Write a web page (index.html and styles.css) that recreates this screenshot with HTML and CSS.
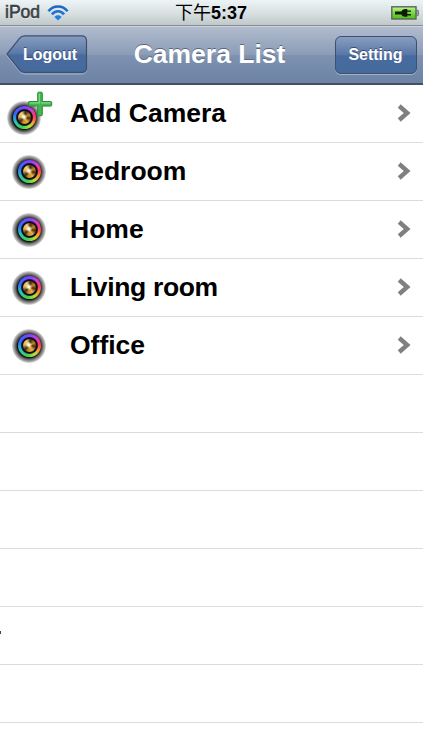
FILE: index.html
```html
<!DOCTYPE html>
<html lang="zh-CN">

<head>
    <meta charset="UTF-8">
    <title>Camera List</title>
    <link rel="stylesheet" href="styles.css">
</head>

<body>
    <div class="status-bar">
        <div class="carrier">
            <span>iPod</span>
            <svg class="wifi" width="22" height="16" viewBox="0 0 22 16">
                <defs>
                    <linearGradient id="wifiFill" gradientUnits="userSpaceOnUse" x1="0" y1="0" x2="0" y2="16">
                        <stop offset="0" stop-color="#1f62bd" />
                        <stop offset="1" stop-color="#1d86ee" />
                    </linearGradient>
                </defs>
                <g fill="none" stroke="url(#wifiFill)" stroke-width="2.6">
                    <path d="M1.4 6.3C6.5 -.2 15.5 -.2 20.6 6.3" />
                    <path d="M4.9 9.4C8.2 5.2 13.8 5.2 17.1 9.4" />
                </g>
                <path fill="url(#wifiFill)" d="M11 15.6L7.4 11.9C9.3 9.7 12.7 9.7 14.6 11.9Z" />
            </svg>
        </div>
        <div class="time">下午<b>5:37</b></div>
        <svg class="battery" width="28" height="14" viewBox="0 0 28 14">
            <defs>
                <linearGradient id="batteryFill" x1="0" y1="0" x2="0" y2="1">
                    <stop offset="0" stop-color="#c2f29c" />
                    <stop offset=".45" stop-color="#79dc40" />
                    <stop offset="1" stop-color="#4dbd16" />
                </linearGradient>
            </defs>
            <rect x=".8" y=".8" width="24.2" height="12.2" fill="url(#batteryFill)" stroke="#5b6459" stroke-width="1.4" />
            <path d="M25.7 4.2h1.1q.8 0 .8 1v3.4q0 1-.8 1h-1.1z" fill="#a7adab" stroke="#596060" stroke-width=".7" />
            <path d="M4 5.6h6.3Q11.2 3 14 3h2.3v1.4H20v1.3h-3.7v2.4H20v1.3h-3.7v1.4H14q-2.8 0-3.7-2.4H4z" fill="#101a08" />
        </svg>
    </div>

    <div class="nav-bar">
        <a class="btn-back" href="#">
            <svg width="82" height="40" viewBox="0 0 82 40">
                <defs>
                    <linearGradient id="backFill" x1="0" y1="0" x2="0" y2="1">
                        <stop offset="0" stop-color="#889ebf" />
                        <stop offset=".5" stop-color="#5876a6" />
                        <stop offset=".52" stop-color="#486b9f" />
                        <stop offset="1" stop-color="#476a9d" />
                    </linearGradient>
                </defs>
                <path d="M18.5 1.5H75.5Q80.5 1.5 80.5 6.5V33Q80.5 38 75.5 38H18.5Q15.5 38 13.5 35.5L1 19.8L13.5 4Q15.5 1.5 18.5 1.5Z" transform="translate(0 1)" fill="none" stroke="#a3b3ca" stroke-width="1" />
                <path d="M18.5 .8H75.5Q80.5 .8 80.5 5.8V32.4Q80.5 37.4 75.5 37.4H18.5Q15.5 37.4 13.5 34.9L1 19.1L13.5 3.3Q15.5 .8 18.5 .8Z" fill="url(#backFill)" stroke="#3c5070" stroke-width="1.2" />
            </svg>
            <span>Logout</span>
        </a>
        <h1>Camera List</h1>
        <a class="btn-setting" href="#">Setting</a>
    </div>

    <ul class="camera-list">
        <li>
            <div class="icon add">
                <div class="lens"></div>
                <svg class="plus" width="26" height="26" viewBox="0 0 26 26">
                    <path d="M10.7 2.2q0-1 1-1h2.6q1 0 1 1v8.3h8.4q1 0 1 1v2.6q0 1-1 1h-8.4v8.6q0 1-1 1h-2.6q-1 0-1-1v-8.6H2.3q-1 0-1-1v-2.6q0-1 1-1h8.4z" fill="#45b552" stroke="#238a35" stroke-width="1" />
                    <path d="M12.3 2.5v9.3H2.8M14 11.8h9.5" fill="none" stroke="#85d98a" stroke-width="1.2" />
                </svg>
            </div>
            <span class="name">Add Camera</span>
            <svg class="arrow" width="14" height="18" viewBox="0 0 14 18"><path d="M2.2 2L10.2 9L2.2 16" /></svg>
        </li>
        <li>
            <div class="icon"><div class="lens"></div></div>
            <span class="name">Bedroom</span>
            <svg class="arrow" width="14" height="18" viewBox="0 0 14 18"><path d="M2.2 2L10.2 9L2.2 16" /></svg>
        </li>
        <li>
            <div class="icon"><div class="lens"></div></div>
            <span class="name">Home</span>
            <svg class="arrow" width="14" height="18" viewBox="0 0 14 18"><path d="M2.2 2L10.2 9L2.2 16" /></svg>
        </li>
        <li>
            <div class="icon"><div class="lens"></div></div>
            <span class="name tight">Living room</span>
            <svg class="arrow" width="14" height="18" viewBox="0 0 14 18"><path d="M2.2 2L10.2 9L2.2 16" /></svg>
        </li>
        <li>
            <div class="icon"><div class="lens"></div></div>
            <span class="name">Office</span>
            <svg class="arrow" width="14" height="18" viewBox="0 0 14 18"><path d="M2.2 2L10.2 9L2.2 16" /></svg>
        </li>
        <li></li>
        <li></li>
        <li></li>
        <li></li>
        <li class="mark"></li>
        <li></li>
        <li></li>
    </ul>
</body>

</html>
```

FILE: styles.css
```css
* {
    margin: 0;
    padding: 0;
    box-sizing: border-box;
}

body {
    height: 750px;
    overflow: hidden;
    font-family: "Liberation Sans", Arial, "Noto Sans CJK SC", sans-serif;
    background-color: #fff;
}

a {
    color: #fff;
    text-decoration: none;
}

/* 状态栏 */
.status-bar {
    display: grid;
    grid-template-columns: 1fr auto 1fr;
    align-items: center;
    height: 26px;
    padding: 0 4px 0 5px;
    background: linear-gradient(#edf4f6, #d9e1e3 50%, #c0c8ca);
    border-bottom: 1px solid #858b91;
}

.carrier {
    display: flex;
    align-items: center;
    font-size: 17.5px;
    color: #3d4042;
    -webkit-text-stroke: 0.6px #3d4042;
    text-shadow: 0 1px 0 #fff;
}

.wifi {
    margin-left: 7px;
}

.time {
    padding: 1px 2px 0 0;
    font-size: 18px;
    line-height: 24px;
    color: #000;
}

.battery {
    justify-self: end;
}

/* 导航栏 */
.nav-bar {
    display: grid;
    grid-template-columns: 82px 1fr 82px;
    align-items: center;
    height: 59px;
    padding: 0 6px;
    background: linear-gradient(#b1bccd, #8b9cb7 50%, #7e92b0 51%, #6c83a5);
    border-top: 1px solid #ccd5e0;
    border-bottom: 2px solid #454f64;
}

.nav-bar h1 {
    padding: 0 4px 2px 0;
    text-align: center;
    font-size: 26.5px;
    line-height: 30px;
    color: #fff;
    white-space: nowrap;
    text-shadow: 0 -1px 0 #59677d;
}

.btn-back {
    position: relative;
    height: 40px;
    padding-left: 17px;
    font-size: 16px;
    font-weight: bold;
    line-height: 40px;
    text-shadow: 0 -1px 0 #3a4d6c;
}

.btn-back svg {
    position: absolute;
    top: 0;
    left: 0;
}

.btn-back span {
    position: relative;
}

.btn-setting {
    height: 38px;
    margin-bottom: 1px;
    padding-right: 1px;
    font-size: 16px;
    font-weight: bold;
    line-height: 36px;
    text-align: center;
    text-shadow: 0 -1px 0 #3a4d6c;
    background: linear-gradient(#889ebf, #5876a6 50%, #486b9f 52%, #476a9d);
    border: 1px solid #3c5070;
    border-radius: 6px;
    box-shadow: 0 1px 0 #a3b3ca;
}

/* 摄像头列表 */
.camera-list {
    list-style: none;
}

.camera-list li {
    display: flex;
    align-items: center;
    height: 58px;
    padding: 0 12px;
    border-bottom: 1px solid #dcdcdc;
}

.icon {
    position: relative;
    width: 58px;
}

.lens {
    position: relative;
    width: 34px;
    height: 34px;
    border-radius: 50%;
    background: radial-gradient(circle closest-side, #15110d 68%, #3c3c3c 73%, #777 82%, #a8a8a8 91%, #e4e4e4);
}

.lens::before {
    content: "";
    position: absolute;
    inset: 5.5px;
    border-radius: 50%;
    background:
        radial-gradient(circle closest-side, #100d18 68%, transparent 78%),
        conic-gradient(#7a45ff, #d63be0 45deg, #ff3a58 85deg, #ff9a2c 120deg, #b6e23a 150deg, #3cd052 190deg, #25c4c0 245deg, #2f68ff 290deg, #7a45ff);
}

.lens::after {
    content: "";
    position: absolute;
    inset: 10.5px;
    border-radius: 50%;
    background:
        radial-gradient(circle closest-side at 46% 46%, #fff6da 0 15%, transparent 55%),
        conic-gradient(from 10deg, #3a2c12, #c58a25 50deg, #4a300d 90deg, #e9ad45 135deg, #c98c28 185deg, #3b2b18 220deg, #e6b85c 270deg, #f3cb7c 320deg, #3a2c12);
}

.icon.add .lens {
    left: -5px;
    top: 4px;
}

.plus {
    position: absolute;
    top: -6px;
    left: 15px;
}

.name {
    flex: 1;
    padding-bottom: 2px;
    font-size: 26.5px;
    font-weight: bold;
    line-height: 30px;
    color: #000;
}

.name.tight {
    letter-spacing: -0.35px;
}

.arrow {
    margin-bottom: 2px;
}

.arrow path {
    fill: none;
    stroke: #808080;
    stroke-width: 4.4;
}

/* 左侧边缘的小黑点 */
.camera-list .mark {
    background: linear-gradient(#444, #444) 0 24px / 1px 3px no-repeat;
}
```
